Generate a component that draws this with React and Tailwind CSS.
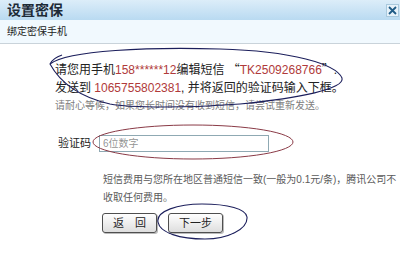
import React from 'react';

const font = { fontFamily: '"Liberation Sans", "Noto Sans CJK SC", sans-serif' };
const cjk = { fontFamily: '"Noto Sans CJK SC", sans-serif' };

// hand drawn marks over the dialog
const Marks = () => (
  <svg className="absolute inset-0 pointer-events-none" width="400" height="253" viewBox="0 0 400 253" fill="none">
    <path
      d="M50 64 C68 50 150 47 220 49 C292 51 336 64 342 78 C345 89 300 98 240 104 C190 108 130 108 110 104 C84 98 62 86 50 64 C52 60 56 57 62 55"
      stroke="#1c1f5c"
      strokeWidth="1.1"
    />
    <ellipse cx="193" cy="142" rx="100" ry="17" stroke="#8a3a46" strokeWidth="1" />
    <path
      d="M158 222 C156 211 178 204 202 204 C228 204 246 209 247 217 C248 229 228 239 205 239 C180 239 160 233 158 222"
      stroke="#1c1f5c"
      strokeWidth="1.1"
    />
  </svg>
);

export default function App() {
  return (
    <div className="relative w-[400px] h-[253px] overflow-hidden bg-white text-[#222]" style={font}>
      {/* title bar */}
      <div className="h-[20px] flex items-center justify-between pl-[7px] pr-[1px] bg-gradient-to-b from-[#dcedf9] to-[#b9daf1]">
        <span className="text-[14px] font-bold leading-none text-[#1d2a36]">设置密保</span>
        <span className="w-[13px] h-[13px] flex items-center justify-center border border-[#a9c9dd] bg-[#e6f2fa]">
          <svg width="9" height="9" viewBox="0 0 9 9">
            <path d="M1 1 L8 8 M8 1 L1 8" stroke="#1f5b86" strokeWidth="1.8" />
          </svg>
        </span>
      </div>

      {/* sub header */}
      <div className="h-[24px] flex items-center px-[7px] bg-[#f1f9fe] border-b border-[#c9d3da] text-[10px] text-[#222]">
        绑定密保手机
      </div>

      <div className="pl-[55px] pt-[16px]">
        <div className="text-[12px] leading-[18px] whitespace-nowrap">
          请您用手机<span className="text-[#b03a3a]">158******12</span>编辑短信 <span style={cjk}>“</span>
          <span className="text-[#b03a3a]">TK2509268766</span>
          <span style={cjk}>”</span>.
        </div>
        <div className="text-[12px] leading-[18px] whitespace-nowrap">
          发送到 <span className="text-[#b03a3a]">1065755802381</span>, 并将返回的验证码输入下框。
        </div>
        <div className="text-[10px] leading-[18px] text-[#808080] whitespace-nowrap">
          请耐心等候，如果您长时间没有收到短信，请尝试重新发送。
        </div>

        <div className="mt-[20px] flex items-center">
          <span className="w-[44px] pl-[3px] text-[11px] text-[#222]">验证码</span>
          <input
            className="w-[170px] h-[17px] border border-[#8fa9b3] px-[3px] text-[10px] outline-none"
            placeholder="6位数字"
            style={font}
          />
        </div>

        <div className="mt-[19px] pl-[48px] text-[10px] leading-[18px] text-[#5a5a5a] whitespace-nowrap">
          短信费用与您所在地区普通短信一致(一般为0.1元/条)，腾讯公司不
          <br />
          收取任何费用。
        </div>

        <div className="mt-[6px] pl-[47px] flex gap-[11px]">
          <button className="w-[55px] h-[20px] rounded-[3px] border border-[#4f4f4f] bg-gradient-to-b from-white to-[#dedede] text-[11px] text-[#222] leading-none shadow-[1px_1px_0_#bbb]" style={font}>
            返　回
          </button>
          <button className="w-[55px] h-[20px] rounded-[3px] border border-[#4f4f4f] bg-gradient-to-b from-white to-[#dedede] text-[11px] text-[#222] leading-none shadow-[1px_1px_0_#bbb]" style={font}>
            下一步
          </button>
        </div>
      </div>

      <Marks />
    </div>
  );
}
